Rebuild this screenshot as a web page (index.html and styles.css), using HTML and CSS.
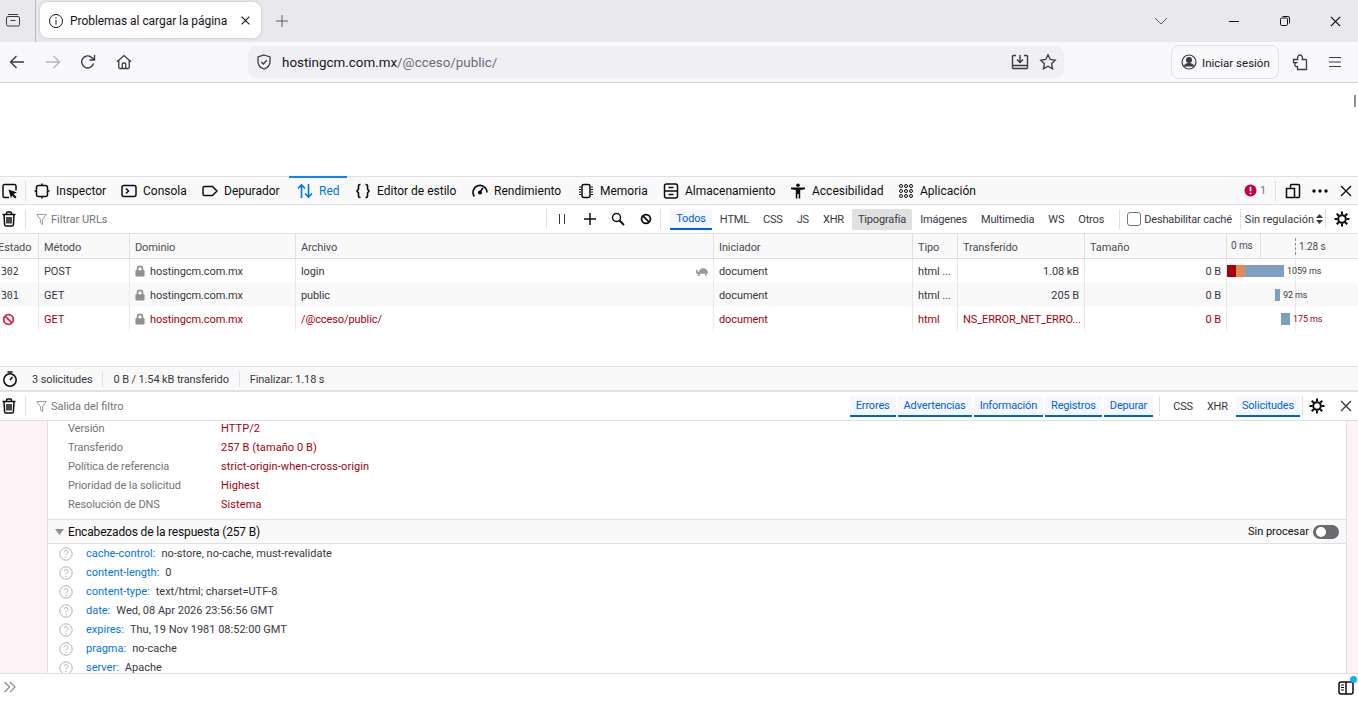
FILE: index.html
```html
<!DOCTYPE html>
<html lang="es">
<head>
    <meta charset="UTF-8">
    <title>Problemas al cargar la página</title>
    <link rel="stylesheet" href="styles.css">
</head>
<body>
    <svg class="sprites" width="0" height="0">
        <symbol id="i-trash" viewBox="0 0 16 16"><path d="M1.5 3.5h13M5.5 3.5V2a1 1 0 0 1 1-1h3a1 1 0 0 1 1 1v1.5M3 3.5l.6 10.2a1.4 1.4 0 0 0 1.4 1.3h6a1.4 1.4 0 0 0 1.4-1.3L13 3.5M6 6v6.5M8 6v6.5M10 6v6.5" fill="none" stroke="currentColor" stroke-width="1.5"/></symbol>
        <symbol id="i-filter" viewBox="0 0 12 14"><path d="M.8 1.5h10.4L7.2 6.8v5.8L4.8 10.6V6.8z" fill="none" stroke="currentColor"/></symbol>
        <symbol id="i-gear" viewBox="0 0 16 16"><circle cx="8" cy="8" r="3.8" fill="none" stroke="currentColor" stroke-width="2"/><path d="M8 .5v3M8 12.5v3M.5 8h3M12.500 8h3M2.700 2.700l2.100 2.100M11.200 11.200l2.100 2.100M13.300 2.700l-2.100 2.100M4.800 11.200l-2.100 2.100" stroke="currentColor" stroke-width="2"/></symbol>
        <symbol id="i-close" viewBox="0 0 14 14"><path d="M2 2l10 10M12 2L2 12" stroke="currentColor" stroke-width="1.4"/></symbol>
        <symbol id="i-lock" viewBox="0 0 12 14"><path d="M2 6V4.500a4 4 0 0 1 8 0V6h.5a1 1 0 0 1 1 1v5.500a1 1 0 0 1-1 1h-9a1 1 0 0 1-1-1V7a1 1 0 0 1 1-1zm2 0h4V4.500a2 2 0 0 0-4 0z" fill="currentColor"/></symbol>
        <symbol id="i-block" viewBox="0 0 14 14"><circle cx="7" cy="7" r="5.200" fill="none" stroke="currentColor" stroke-width="2"/><path d="M3.300 3.300l7.400 7.400" stroke="currentColor" stroke-width="2"/></symbol>
        <symbol id="i-help" viewBox="0 0 14 14"><circle cx="7" cy="7" r="6.200" fill="none" stroke="currentColor"/><path d="M5.100 5.400a1.900 1.900 0 1 1 2.900 1.600c-.7.500-1 .8-1 1.600" fill="none" stroke="currentColor"/><circle cx="7" cy="10.400" r=".7" fill="currentColor"/></symbol>
    </svg>

    <!-- browser chrome -->
    <div class="tabbar">
        <div class="view-btn">
            <svg class="icon" width="16" height="16" viewBox="0 0 16 16" fill="none" stroke="currentColor"><path d="M3 2.500h10M1.500 6a1.500 1.500 0 0 1 1.500-1.500h10A1.500 1.500 0 0 1 14.500 6v6.500A1.500 1.500 0 0 1 13 14H3a1.500 1.500 0 0 1-1.500-1.500zM5.500 8.500h5"/></svg>
        </div>
        <div class="tab">
            <svg width="16" height="16" viewBox="0 0 16 16" fill="none" stroke="#15141a"><circle cx="8" cy="8" r="6.500"/><path d="M8 7v4.500M8 4.300v1.400"/></svg>
            <span class="tab-title">Problemas al cargar la página</span>
            <svg class="tab-close" width="11" height="11"><use href="#i-close"/></svg>
        </div>
        <svg class="new-tab" width="14" height="14" viewBox="0 0 14 14" stroke="#5b5b66"><path d="M7 1v12M1 7h12"/></svg>
        <svg class="tab-list" width="14" height="8" viewBox="0 0 14 8" fill="none" stroke="#5b5b66"><path d="M1 1l6 6 6-6"/></svg>
        <div class="win-btns">
            <svg width="12" height="12" viewBox="0 0 12 12" stroke="#15141a"><path d="M1 6.500h10"/></svg>
            <svg width="12" height="12" viewBox="0 0 12 12" fill="none" stroke="#15141a"><rect x="1.500" y="3" width="7" height="7.500" rx="1.200"/><path d="M3.500 1.500h5.500a1.500 1.500 0 0 1 1.500 1.500v5.500"/></svg>
            <svg width="13" height="13"><use href="#i-close" stroke="#15141a"/></svg>
        </div>
    </div>
    <div class="navbar">
        <div class="nav-btns">
            <svg width="16" height="16" viewBox="0 0 16 16" fill="none" stroke="#3a3944" stroke-width="1.400"><path d="M15 8H1.500M7.500 2l-6 6 6 6"/></svg>
            <svg width="16" height="16" viewBox="0 0 16 16" fill="none" stroke="#b5b5bb" stroke-width="1.400"><path d="M1 8h13.500M8.500 2l6 6-6 6"/></svg>
            <svg width="16" height="16" viewBox="0 0 16 16" fill="none" stroke="#3a3944" stroke-width="1.400"><path d="M13.500 9.500A6 6 0 1 1 12 3.700L14 5.500M14.500 1v5h-5"/></svg>
            <svg width="16" height="16" viewBox="0 0 16 16" fill="none" stroke="#3a3944" stroke-width="1.300"><path d="M1 7.800L8 1.500l7 6.300M2.800 6.500v6.700a1.300 1.300 0 0 0 1.300 1.300h7.800a1.300 1.300 0 0 0 1.300-1.300V6.500M6.300 14.500V10a1 1 0 0 1 1-1h1.400a1 1 0 0 1 1 1v4.500"/></svg>
        </div>
        <div class="urlbar">
            <svg width="16" height="16" viewBox="0 0 16 16" fill="none" stroke="#3a3944" stroke-width="1.300"><path d="M8 1l6 2v5c0 3.500-2.700 5.800-6 7-3.300-1.200-6-3.500-6-7V3zM5.300 8l2 2 3.500-3.700"/></svg>
            <span class="url"><b>hostingcm.com.mx</b>/@cceso/public/</span>
            <svg class="url-end" width="18" height="16" viewBox="0 0 18 16" fill="none" stroke="#3a3944" stroke-width="1.400"><path d="M5 1.500H2.500a1 1 0 0 0-1 1v11a1 1 0 0 0 1 1h13a1 1 0 0 0 1-1v-11a1 1 0 0 0-1-1H13M1.500 11.500h15M9 1v7M6 5.500L9 8.500l3-3"/></svg>
            <svg width="18" height="18" viewBox="0 0 18 18" fill="none" stroke="#3a3944" stroke-width="1.300"><path d="M9 1.800l2.200 4.700 5 .7-3.600 3.500.9 5L9 13.300l-4.500 2.400.9-5L1.800 7.200l5-.7z"/></svg>
        </div>
        <div class="signin">
            <svg width="16" height="16" viewBox="0 0 16 16" fill="none" stroke="#3a3944" stroke-width="1.200"><circle cx="8" cy="8" r="7"/><circle cx="8" cy="6" r="2.400" fill="#3a3944"/><path d="M3.500 12.500c.5-2 2.200-2.800 4.500-2.800s4 .8 4.500 2.800" fill="#3a3944"/></svg>
            <span>Iniciar sesión</span>
        </div>
        <svg class="puzzle" width="16" height="17" viewBox="0 0 16 17" fill="none" stroke="#3a3944" stroke-width="1.300"><path d="M1.500 5.500h4.200C5 3.500 6.200 1 8 1s3 2.500 2.300 4.500h3.200a1 1 0 0 1 1 1v9h-9v-3C3.700 13 2.800 11.800 2.800 10.600s.9-2.400 2.700-1.900H1.500z"/></svg>
        <svg class="menu" width="14" height="12" viewBox="0 0 14 12" stroke="#3a3944" stroke-width="1.200"><path d="M1 1.500h12M1 6h12M1 10.500h12"/></svg>
    </div>

    <div class="page">
        <span class="page-mark"></span>
    </div>

    <!-- devtools -->
    <div class="dt-tabs">
        <div class="dt-pick">
            <svg width="16" height="16" viewBox="0 0 16 16" fill="none" stroke="#0c0c0d" stroke-width="1.500"><path d="M7 14.500H2.500a1.500 1.500 0 0 1-1.500-1.500V3a1.500 1.500 0 0 1 1.500-1.500h10A1.500 1.500 0 0 1 14 3v4.500"/><path d="M6.500 6.500l8.500 3-3.500 1.500 3 3-1.500 1.500-3-3L9 15.500z" fill="#0c0c0d" stroke="none"/></svg>
        </div>
        <div class="dt-tab tab-inspector">
            <svg width="16" height="16" viewBox="0 0 16 16" fill="none" stroke="#0c0c0d" stroke-width="1.500"><rect x="2.500" y="2.500" width="11" height="11" rx="2"/><path d="M8 .5v2M8 13.500v2M.5 8h2M13.500 8h2"/></svg>
            <span>Inspector</span>
        </div>
        <div class="dt-tab tab-console">
            <svg width="16" height="16" viewBox="0 0 16 16" fill="none" stroke="#0c0c0d" stroke-width="1.500"><rect x="1" y="2.500" width="14" height="11" rx="2"/><path d="M5 5.500L7.500 8 5 10.500"/></svg>
            <span>Consola</span>
        </div>
        <div class="dt-tab tab-debugger">
            <svg width="16" height="16" viewBox="0 0 16 16" fill="none" stroke="#0c0c0d" stroke-width="1.500"><path d="M2.500 3.500h8L15 8l-4.500 4.500h-8A1.500 1.500 0 0 1 1 11V5a1.500 1.500 0 0 1 1.500-1.500z"/></svg>
            <span>Depurador</span>
        </div>
        <div class="dt-tab tab-net is-active">
            <svg width="16" height="16" viewBox="0 0 16 16" fill="none" stroke="currentColor" stroke-width="1.600"><path d="M4.500 15V2M1 5.500L4.500 2 8 5.500M11.500 1v13M8 10.500l3.500 3.500 3.500-3.500"/></svg>
            <span>Red</span>
        </div>
        <div class="dt-tab tab-style">
            <svg width="16" height="16" viewBox="0 0 16 16" fill="none" stroke="#0c0c0d" stroke-width="1.600"><path d="M5.500 1.500H5A1.500 1.500 0 0 0 3.500 3v3L2 8l1.500 2v3A1.500 1.500 0 0 0 5 14.500h.5M10.500 1.500h.5A1.500 1.500 0 0 1 12.500 3v3L14 8l-1.500 2v3a1.500 1.500 0 0 1-1.500 1.500h-.5"/></svg>
            <span>Editor de estilo</span>
        </div>
        <div class="dt-tab tab-perf">
            <svg width="16" height="16" viewBox="0 0 16 16" fill="none" stroke="#0c0c0d" stroke-width="1.600"><path d="M2.300 13.500A7 7 0 1 1 15 9.500M8 9l3-4"/><circle cx="8" cy="9.500" r="1.300" fill="#0c0c0d"/></svg>
            <span>Rendimiento</span>
        </div>
        <div class="dt-tab tab-memory">
            <svg width="16" height="16" viewBox="0 0 16 16" fill="none" stroke="#0c0c0d"><rect x="4" y="1.500" width="8" height="13" rx="2" stroke-width="1.500"/><path d="M1 4h2M1 6.500h2M1 9h2M1 11.500h2M13 4h2M13 6.500h2M13 9h2M13 11.500h2"/></svg>
            <span>Memoria</span>
        </div>
        <div class="dt-tab tab-storage">
            <svg width="16" height="16" viewBox="0 0 16 16" fill="none" stroke="#0c0c0d" stroke-width="1.500"><rect x="1.500" y="1" width="13" height="14" rx="2"/><path d="M1.500 8h13M5.500 4.500h5M5.500 11.500h5"/></svg>
            <span>Almacenamiento</span>
        </div>
        <div class="dt-tab tab-a11y">
            <svg width="16" height="16" viewBox="0 0 16 16" fill="#0c0c0d"><circle cx="8" cy="2.200" r="1.800"/><path d="M1 4.500h14v1.800l-4.800.7v8.500H8.700v-4.500H7.300v4.500H5.800V7l-4.800-.7z"/></svg>
            <span>Accesibilidad</span>
        </div>
        <div class="dt-tab tab-app">
            <svg width="16" height="16" viewBox="0 0 16 16" fill="none" stroke="#0c0c0d"><circle cx="3" cy="3" r="1.500"/><circle cx="8" cy="3" r="1.500"/><circle cx="13" cy="3" r="1.500"/><circle cx="3" cy="8" r="1.500"/><circle cx="8" cy="8" r="1.500"/><circle cx="13" cy="8" r="1.500"/><circle cx="3" cy="13" r="1.500"/><circle cx="8" cy="13" r="1.500"/><circle cx="13" cy="13" r="1.500"/></svg>
            <span>Aplicación</span>
        </div>
        <div class="dt-right">
            <svg width="13" height="13" viewBox="0 0 13 13"><circle cx="6.500" cy="6.500" r="6" fill="#c50042"/><path d="M6.500 2.800v4.400M6.500 8.700v1.500" stroke="#fff" stroke-width="1.800"/></svg>
            <span class="err-count">1</span>
            <span class="sep sep-tall"></span>
            <svg class="dock" width="16" height="16" viewBox="0 0 16 16" fill="none" stroke="#0c0c0d" stroke-width="1.500"><path d="M5.500 4.500V2.500a1 1 0 0 1 1-1h7a1 1 0 0 1 1 1v11a1 1 0 0 1-1 1H10M1.500 5.500h8v9h-8z"/></svg>
            <svg class="dots" width="16" height="4" viewBox="0 0 16 4" fill="#0c0c0d"><circle cx="2" cy="2" r="1.700"/><circle cx="8" cy="2" r="1.700"/><circle cx="14" cy="2" r="1.700"/></svg>
            <svg class="dt-close" width="14" height="14"><use href="#i-close"/></svg>
        </div>
    </div>

    <div class="toolbar net-filter">
        <svg class="trash" width="16" height="16"><use href="#i-trash"/></svg>
        <span class="sep sep-trash"></span>
        <svg class="funnel" width="11" height="13"><use href="#i-filter"/></svg>
        <span class="filter-text">Filtrar URLs</span>
        <span class="sep"></span>
        <svg class="tool pause" width="8" height="12" viewBox="0 0 8 12" stroke="#38383d"><path d="M1.500 1v10M6.500 1v10"/></svg>
        <svg class="tool" width="12" height="12" viewBox="0 0 12 12" stroke="#0c0c0d" stroke-width="1.500"><path d="M6 0v12M0 6h12"/></svg>
        <svg class="tool" width="14" height="14" viewBox="0 0 14 14" fill="none" stroke="#0c0c0d" stroke-width="1.500"><circle cx="5.500" cy="5.500" r="4"/><path d="M8.500 8.500l4.500 4.500" stroke-width="2"/></svg>
        <svg class="tool" width="12" height="12" viewBox="0 0 14 14" color="#0c0c0d"><use href="#i-block"/></svg>
        <span class="sep sep-types"></span>
        <span class="chip chip-on">Todos</span>
        <span class="chip">HTML</span>
        <span class="chip">CSS</span>
        <span class="chip">JS</span>
        <span class="chip">XHR</span>
        <span class="chip chip-hover">Tipografía</span>
        <span class="chip">Imágenes</span>
        <span class="chip">Multimedia</span>
        <span class="chip">WS</span>
        <span class="chip">Otros</span>
        <span class="sep sep-cache"></span>
        <span class="checkbox"></span>
        <span class="cache-label">Deshabilitar caché</span>
        <span class="sep sep-thr"></span>
        <span class="throttle">Sin regulación</span>
        <svg class="updown" width="7" height="10" viewBox="0 0 7 10" fill="#38383d"><path d="M3.500 0L7 4H0zM3.500 10L0 6h7z"/></svg>
        <span class="sep sep-gear"></span>
        <svg class="gear" width="16" height="16"><use href="#i-gear"/></svg>
    </div>

    <div class="net-table">
        <div class="net-row net-head">
            <div class="cell cell-status">Estado</div>
            <div class="cell">Método</div>
            <div class="cell">Dominio</div>
            <div class="cell">Archivo</div>
            <div class="cell">Iniciador</div>
            <div class="cell">Tipo</div>
            <div class="cell">Transferido</div>
            <div class="cell">Tamaño</div>
            <div class="cell cell-wf wf-head"><span class="wf-start">0 ms</span><span class="wf-end">1.28 s</span></div>
        </div>
        <div class="net-row">
            <div class="cell cell-status mono">302</div>
            <div class="cell">POST</div>
            <div class="cell"><svg class="lock" width="10" height="12"><use href="#i-lock"/></svg>hostingcm.com.mx</div>
            <div class="cell cell-file">login
                <svg class="turtle" width="13" height="9" viewBox="0 0 14 9" fill="#9a9a9f"><path d="M1 7c0-3.500 2-6 5-6s4.500 2 5 4h1V3.500a1.200 1.200 0 0 1 2 0V6c0 .8-.5 1-1 1h-1l.5 2H10L9.500 7h-5L4 9H2.500L3 7z"/></svg>
            </div>
            <div class="cell">document</div>
            <div class="cell">html ...</div>
            <div class="cell cell-num">1.08 kB</div>
            <div class="cell cell-num">0 B</div>
            <div class="cell cell-wf">
                <span class="bar bar-block" style="width:9px"></span><span class="bar bar-wait" style="width:9px"></span><span class="bar bar-recv" style="width:39px"></span><span class="wf-label">1059 ms</span>
            </div>
        </div>
        <div class="net-row net-row-alt">
            <div class="cell cell-status mono">301</div>
            <div class="cell">GET</div>
            <div class="cell"><svg class="lock" width="10" height="12"><use href="#i-lock"/></svg>hostingcm.com.mx</div>
            <div class="cell">public</div>
            <div class="cell">document</div>
            <div class="cell">html ...</div>
            <div class="cell cell-num">205 B</div>
            <div class="cell cell-num">0 B</div>
            <div class="cell cell-wf">
                <span class="bar bar-recv" style="margin-left:48px;width:5px"></span><span class="wf-label">92 ms</span>
            </div>
        </div>
        <div class="net-row net-row-err">
            <div class="cell cell-status"><svg class="err-icon" width="13" height="13"><use href="#i-block"/></svg></div>
            <div class="cell">GET</div>
            <div class="cell"><svg class="lock" width="10" height="12"><use href="#i-lock"/></svg>hostingcm.com.mx</div>
            <div class="cell">/@cceso/public/</div>
            <div class="cell">document</div>
            <div class="cell">html</div>
            <div class="cell">NS_ERROR_NET_ERRO...</div>
            <div class="cell cell-num">0 B</div>
            <div class="cell cell-wf">
                <span class="bar bar-recv" style="margin-left:54px;width:9px"></span><span class="wf-label">175 ms</span>
            </div>
        </div>
        <span class="wf-line"></span>
    </div>

    <div class="net-status">
        <svg class="stopwatch" width="16" height="16" viewBox="0 0 16 16" fill="none" stroke="#0c0c0d" stroke-width="1.500"><circle cx="8" cy="9" r="6.200"/><path d="M5.500 1h5M8 9l2.500-3"/></svg>
        <span>3 solicitudes</span>
        <span class="sep"></span>
        <span>0 B / 1.54 kB transferido</span>
        <span class="sep"></span>
        <span>Finalizar: 1.18 s</span>
    </div>

    <div class="toolbar con-filter">
        <svg class="trash" width="16" height="16"><use href="#i-trash"/></svg>
        <span class="sep sep-trash"></span>
        <svg class="funnel" width="11" height="13"><use href="#i-filter"/></svg>
        <span class="filter-text">Salida del filtro</span>
        <span class="chip chip-on chip-first">Errores</span>
        <span class="chip chip-on">Advertencias</span>
        <span class="chip chip-on">Información</span>
        <span class="chip chip-on">Registros</span>
        <span class="chip chip-on">Depurar</span>
        <span class="sep sep-css"></span>
        <span class="chip chip-css">CSS</span>
        <span class="chip chip-xhr">XHR</span>
        <span class="chip chip-on">Solicitudes</span>
        <span class="sep sep-cgear"></span>
        <svg class="gear" width="16" height="16"><use href="#i-gear"/></svg>
        <svg class="con-close" width="14" height="14"><use href="#i-close"/></svg>
    </div>

    <div class="console">
        <div class="gutter"></div>
        <div class="detail">
            <div class="kv"><span class="kv-key">Versión</span><span class="kv-val">HTTP/2</span></div>
            <div class="kv"><span class="kv-key">Transferido</span><span class="kv-val">257 B (tamaño 0 B)</span></div>
            <div class="kv"><span class="kv-key">Política de referencia</span><span class="kv-val">strict-origin-when-cross-origin</span></div>
            <div class="kv"><span class="kv-key">Prioridad de la solicitud</span><span class="kv-val">Highest</span></div>
            <div class="kv"><span class="kv-key">Resolución de DNS</span><span class="kv-val">Sistema</span></div>
            <div class="section-head">
                <svg class="twisty" width="9" height="6" viewBox="0 0 9 6" fill="#8f8f94"><path d="M0 0h9L4.500 6z"/></svg>
                <span class="section-title">Encabezados de la respuesta (257 B)</span>
                <span class="raw-label">Sin procesar</span>
                <span class="toggle"></span>
            </div>
            <div class="hdr"><svg class="help" width="14" height="14"><use href="#i-help"/></svg><span class="hdr-name">cache-control:</span><span>no-store, no-cache, must-revalidate</span></div>
            <div class="hdr"><svg class="help" width="14" height="14"><use href="#i-help"/></svg><span class="hdr-name">content-length:</span><span>0</span></div>
            <div class="hdr"><svg class="help" width="14" height="14"><use href="#i-help"/></svg><span class="hdr-name">content-type:</span><span>text/html; charset=UTF-8</span></div>
            <div class="hdr"><svg class="help" width="14" height="14"><use href="#i-help"/></svg><span class="hdr-name">date:</span><span>Wed, 08 Apr 2026 23:56:56 GMT</span></div>
            <div class="hdr"><svg class="help" width="14" height="14"><use href="#i-help"/></svg><span class="hdr-name">expires:</span><span>Thu, 19 Nov 1981 08:52:00 GMT</span></div>
            <div class="hdr"><svg class="help" width="14" height="14"><use href="#i-help"/></svg><span class="hdr-name">pragma:</span><span>no-cache</span></div>
            <div class="hdr"><svg class="help" width="14" height="14"><use href="#i-help"/></svg><span class="hdr-name">server:</span><span>Apache</span></div>
        </div>
        <div class="gutter gutter-right"></div>
    </div>

    <div class="con-input">
        <svg width="14" height="12" viewBox="0 0 14 12" fill="none" stroke="#8f8f94" stroke-width="1.300"><path d="M1.500 1l5 5-5 5M7 1l5 5-5 5"/></svg>
        <span class="sidebar-btn">
            <svg width="16" height="14" viewBox="0 0 16 14" fill="none" stroke="#0c0c0d" stroke-width="1.500"><rect x="1" y="1" width="14" height="12" rx="2"/><path d="M8 1v12"/><path d="M3 4h3M3 6.500h3M3 9h3" stroke-width="1"/></svg>
            <span class="dot"></span>
        </span>
    </div>
</body>
</html>
```

FILE: styles.css
```css
* {
    box-sizing: border-box;
}

html, body {
    height: 100%;
    margin: 0;
    overflow: hidden;
}

body {
    font-family: Roboto, "Open Sans", sans-serif;
    font-size: 11px;
    color: #38383d;
    background: #fff;
}

svg {
    flex: none;
    display: block;
}

.sprites {
    position: absolute;
}

/* browser chrome */
.tabbar {
    height: 42px;
    display: flex;
    align-items: center;
    background: #e9e9ed;
    color: #15141a;
}

.view-btn {
    width: 36px;
    height: 42px;
    padding: 12px 0 0 5px;
    border-right: 1px solid #b9b9bd;
    color: #3a3944;
}

.tab {
    width: 221px;
    height: 36px;
    margin: 0 0 2px 4px;
    padding: 1px 10px 0 8px;
    display: flex;
    align-items: center;
    background: #fff;
    border-radius: 8px;
    box-shadow: 0 0 3px rgba(0, 0, 0, 0.2);
}

.tab-title {
    flex: 1;
    margin-left: 6px;
    font-size: 12px;
    letter-spacing: -0.05px;
    white-space: nowrap;
}

.new-tab {
    margin: 0 0 0 14px;
}

.tab-list {
    margin-left: 865px;
}

.win-btns {
    margin-left: auto;
    width: 130px;
    padding-right: 16px;
    display: flex;
    justify-content: space-between;
    align-items: center;
}

.navbar {
    height: 41px;
    display: flex;
    align-items: center;
    background: #f9f9fb;
    border-bottom: 1px solid #cfcfd8;
}

.nav-btns {
    width: 248px;
    padding: 0 116px 0 9px;
    display: flex;
    justify-content: space-between;
}

.urlbar {
    width: 816px;
    height: 32px;
    padding: 0 7px 0 8px;
    display: flex;
    align-items: center;
    background: #f0f0f4;
    border-radius: 8px;
}

.url {
    flex: 1;
    margin-left: 10px;
    padding-top: 1px;
    font-size: 13.4px;
    color: #6b6b75;
}

.url b {
    font-weight: 400;
    color: #15141a;
}

.url-end {
    margin-right: 10px;
}

.signin {
    width: 108px;
    height: 34px;
    margin-left: 107px;
    display: flex;
    align-items: center;
    gap: 5px;
    padding-left: 9px;
    border: 1px solid #e0e0e6;
    border-radius: 8px;
    font-size: 11.5px;
    color: #15141a;
    white-space: nowrap;
}

.signin span {
    padding-top: 1px;
}

.puzzle {
    margin-left: 13px;
}

.menu {
    margin-left: 20px;
}

.page {
    height: 93px;
    display: flex;
    justify-content: flex-end;
    padding: 12px 2px 0 0;
}

.page-mark {
    width: 2px;
    height: 12px;
    background: #8f8f94;
}

/* devtools tab strip */
.dt-tabs {
    height: 29px;
    display: flex;
    align-items: center;
    background: #f9f9fa;
    border-top: 1px solid #e0e0e2;
    border-bottom: 1px solid #e0e0e2;
    font-size: 12px;
    color: #0c0c0d;
}

.dt-pick {
    width: 26px;
    height: 20px;
    padding: 2px 0 0 2px;
    border-right: 1px solid #e0e0e2;
}

.dt-tab {
    height: 28px;
    display: flex;
    align-items: center;
    gap: 6px;
    padding-left: 8px;
    white-space: nowrap;
}

.tab-inspector { width: 87px; }
.tab-console { width: 81px; }
.tab-debugger { width: 95px; }
.tab-style { width: 117px; }
.tab-perf { width: 106px; }
.tab-memory { width: 85px; }
.tab-storage { width: 127px; }
.tab-a11y { width: 108px; }
.tab-app { width: 90px; }

.tab-net {
    width: 58px;
    margin-top: -1px;
    height: 29px;
    color: #0074e8;
    border-top: 2px solid #0a84ff;
}

.dt-right {
    margin-left: auto;
    display: flex;
    align-items: center;
    padding-right: 5px;
}

.err-count {
    width: 9px;
    margin-left: 1px;
    padding-left: 2px;
    font-size: 11px;
    color: #737373;
}

.dock {
    margin-left: 9px;
}

.dots {
    margin-left: 11px;
}

.dt-close {
    margin-left: 11px;
}

/* filter toolbars */
.toolbar {
    height: 29px;
    display: flex;
    align-items: center;
    border-bottom: 1px solid #e0e0e2;
    color: #38383d;
}

.sep {
    width: 1px;
    height: 20px;
    background: #e0e0e2;
}

.sep-tall {
    height: 20px;
    margin-left: 8px;
}

.trash {
    margin-left: 1px;
    color: #0c0c0d;
}

.sep-trash {
    margin-left: 8px;
}

.funnel {
    margin-left: 10px;
    color: #8f8f94;
}

.filter-text {
    margin-left: 4px;
    color: #737373;
    flex: 1;
}

.tool {
    margin-left: 15px;
}

.pause {
    margin-left: 11px;
    margin-right: 3px;
}

.sep-types {
    margin: 0 9px 0 8px;
}

.chip {
    height: 21px;
    padding: 0 6px;
    margin-right: 2px;
    display: flex;
    align-items: center;
    border-radius: 2px 2px 0 0;
    letter-spacing: -0.17px;
    white-space: nowrap;
}

.chip-on {
    color: #0060df;
    background: #f5f8fe;
    border-bottom: 2px solid #0060df;
    padding-top: 1px;
}

.chip-hover {
    background: #e0e0e2;
}

.checkbox {
    width: 14px;
    height: 14px;
    margin-left: 7px;
    border: 1px solid #77777c;
    border-radius: 3px;
    background: #fff;
}

.cache-label {
    margin-left: 3px;
    letter-spacing: -0.15px;
    white-space: nowrap;
}

.sep-cache {
    margin-left: 7px;
}

.sep-thr {
    margin-left: 8px;
}

.throttle {
    margin-left: 4px;
    white-space: nowrap;
}

.updown {
    margin-left: 2px;
}

.sep-gear {
    margin-left: 2px;
}

.gear {
    margin-left: 8px;
    color: #0c0c0d;
}

.net-filter .gear {
    margin-right: 8px;
}

/* request table */
.net-table {
    height: 132px;
    position: relative;
}

.net-row {
    height: 24px;
    display: grid;
    grid-template-columns: 39px 91px 166px 418px 199px 45px 127px 142px 1fr;
}

.net-head {
    height: 25px;
    background: #f9f9fa;
    border-bottom: 1px solid #e0e0e2;
    color: #4a4a4f;
}

.net-head .cell {
    padding-top: 2px;
    border-right-color: #e0e0e2;
}

.net-row-alt {
    background: #f9f9fa;
}

.net-row-err {
    color: #a4000f;
}

.cell {
    display: flex;
    align-items: center;
    padding: 0 5px;
    border-right: 1px solid #e9e9ea;
    letter-spacing: -0.1px;
    white-space: nowrap;
    overflow: hidden;
}

.cell-status {
    padding: 0;
    margin-left: -2px;
}

.mono {
    padding-left: 3px;
    font-family: "DejaVu Sans Mono", monospace;
    font-size: 10px;
    letter-spacing: -0.2px;
}

.cell-num {
    justify-content: flex-end;
}

.cell-file {
    justify-content: space-between;
    padding-right: 4px;
}

.turtle {
    transform: scaleX(-1);
}

.cell-wf {
    padding: 0;
    border-right: 0;
}

.lock {
    margin-right: 5px;
    color: #8f8f94;
}

.err-icon {
    margin-left: 4px;
    color: #d7264f;
}

.bar {
    height: 12px;
    flex: none;
}

.bar-block { background: #a4000f; }
.bar-wait { background: #e08a55; }
.bar-recv { background: #7f9fc2; }

.wf-label {
    position: relative;
    z-index: 1;
    margin-left: 3px;
    font-size: 9px;
}

.net-head .wf-head {
    padding: 0 0 0 4px;
    font-size: 10px;
}

.wf-start {
    width: 30px;
    height: 24px;
    line-height: 24px;
    border-right: 1px solid #e0e0e2;
}

.wf-end {
    margin-left: 34px;
    padding-left: 3px;
    height: 17px;
    line-height: 17px;
    border-left: 1px dashed #8f8f94;
}

.wf-line {
    position: absolute;
    left: 1295px;
    top: 25px;
    width: 1px;
    height: 72px;
    background: #e9e9ea;
}

/* status bar */
.net-status {
    height: 26px;
    display: flex;
    align-items: center;
    gap: 10px;
    padding: 1px 0 0 2px;
    background: #f9f9fa;
    border-top: 1px solid #e0e0e2;
    border-bottom: 2px solid #e0e0e2;
    letter-spacing: -0.12px;
}

.stopwatch {
    margin-right: 4px;
}

.net-status .sep {
    height: 16px;
}

.con-filter .chip {
    padding: 1px 6px 0;
}

.sep-css {
    margin: 0 7px 0 4px;
}

.sep-cgear {
    margin-left: 0;
}

.con-filter .gear {
    margin-left: 6px;
}

.con-close {
    margin: 0 5px 0 14px;
}

/* console panel */
.console {
    height: 252px;
    display: flex;
    overflow: hidden;
}

.gutter {
    width: 48px;
    background: #fdf2f5;
    border-right: 1px solid #e0e0e2;
}

.gutter-right {
    width: 12px;
    border-right: 0;
    border-left: 1px solid #e0e0e2;
}

.detail {
    flex: 1;
    margin-top: -2px;
}

.kv {
    height: 19px;
    display: flex;
    align-items: center;
    padding-left: 20px;
}

.kv-key {
    width: 153px;
    letter-spacing: -0.08px;
    color: #737373;
}

.kv-val {
    letter-spacing: 0.08px;
    color: #a4000f;
}

.section-head {
    height: 25px;
    margin-top: 5px;
    display: flex;
    align-items: center;
    padding: 0 7px 0 7px;
    background: #f9f9fa;
    border-top: 1px solid #e0e0e2;
    border-bottom: 1px solid #e0e0e2;
}

.section-title {
    flex: 1;
    margin-left: 4px;
    font-size: 12px;
    letter-spacing: -0.17px;
    color: #0c0c0d;
}

.raw-label {
    color: #0c0c0d;
}

.toggle {
    width: 26px;
    height: 14px;
    margin-left: 4px;
    position: relative;
    background: #6a6a6f;
    border-radius: 7px;
}

.toggle::before {
    content: "";
    position: absolute;
    left: 3px;
    top: 2px;
    width: 10px;
    height: 10px;
    background: #fff;
    border-radius: 50%;
}

.hdr {
    height: 19px;
    display: flex;
    align-items: center;
    padding-left: 11px;
}

.help {
    margin-right: 13px;
    color: #b1b1b3;
}

.hdr-name {
    margin-right: 6px;
    color: #0074e8;
}

/* console input */
.con-input {
    height: 39px;
    display: flex;
    justify-content: space-between;
    align-items: flex-start;
    padding: 7px 4px 0 3px;
    border-top: 1px solid #e0e0e2;
}

.sidebar-btn {
    position: relative;
}

.dot {
    position: absolute;
    right: -3px;
    top: -5px;
    width: 7px;
    height: 7px;
    background: #0cb0ff;
    border-radius: 50%;
}
```
